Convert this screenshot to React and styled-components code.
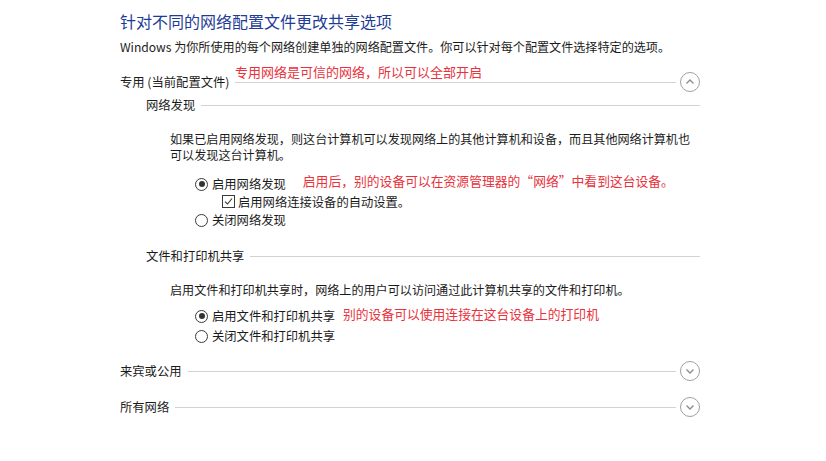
import React from 'react';
import styled, { createGlobalStyle } from 'styled-components';

const GlobalStyle = createGlobalStyle`
  html, body {
    margin: 0;
    padding: 0;
    background: #ffffff;
  }
  body {
    font-family: "Microsoft YaHei", "Noto Sans CJK SC", "Noto Sans", sans-serif;
    color: #1b1b1b;
  }
`;

const Page = styled.div`
  width: 826px;
  height: 461px;
  box-sizing: border-box;
  padding: 10px 0 0 120px;
  display: flex;
  flex-direction: column;
`;

const Content = styled.div`
  width: 580px;
  display: flex;
  flex-direction: column;
`;

const Title = styled.h1`
  margin: 0;
  font-size: 16px;
  font-weight: 400;
  line-height: 22px;
  color: #1e3c96;
  white-space: nowrap;
`;

const Text = styled.p`
  margin: ${(p) => p.$top || 0}px 0 0 ${(p) => p.$indent || 0}px;
  font-size: 12.1px;
  line-height: 16px;
  white-space: nowrap;
`;

const HeaderRow = styled.div`
  position: relative;
  display: flex;
  align-items: center;
  height: ${(p) => p.$height}px;
  margin-top: ${(p) => p.$top}px;
  padding-left: ${(p) => p.$indent || 0}px;
  font-size: 12.3px;
  white-space: nowrap;
`;

const Rule = styled.div`
  flex: 1;
  height: 1px;
  background: #d2d2d2;
  margin-left: 6px;
`;

const Note = styled.span`
  color: #e8323c;
  font-size: 12.8px;
  line-height: 16px;
  white-space: nowrap;
`;

const HeaderNote = styled(Note)`
  position: absolute;
  left: 115px;
  top: -7px;
  font-size: 13px;
`;

const ToggleCircle = styled.div`
  width: 18px;
  height: 18px;
  border: 1.3px solid #a0a0a0;
  border-radius: 50%;
  margin-left: 4px;
  display: flex;
  align-items: center;
  justify-content: center;
  flex-shrink: 0;
`;

const OptionRow = styled.label`
  display: flex;
  align-items: center;
  height: ${(p) => p.$height || 20}px;
  margin-top: ${(p) => p.$top || 0}px;
  padding-left: ${(p) => p.$indent}px;
  font-size: 12.3px;
  white-space: nowrap;
`;

const Radio = styled.span`
  width: 11px;
  height: 11px;
  border: 1px solid #3a3a3a;
  border-radius: 50%;
  margin-right: 4px;
  display: flex;
  align-items: center;
  justify-content: center;
  flex-shrink: 0;

  &::after {
    content: '';
    width: 6px;
    height: 6px;
    border-radius: 50%;
    background: ${(p) => (p.$checked ? '#333333' : 'transparent')};
  }
`;

const Check = styled.span`
  width: 11px;
  height: 11px;
  border: 1px solid #3a3a3a;
  margin-right: 3px;
  display: flex;
  align-items: center;
  justify-content: center;
  flex-shrink: 0;
`;

const InlineNote = styled(Note)`
  margin-left: ${(p) => p.$gap}px;
  align-self: flex-start;
  margin-top: ${(p) => p.$lift}px;
`;

const Chevron = ({ up }) => (
  <svg width="10" height="10" viewBox="0 0 10 10">
    <path
      d={up ? 'M1.5 6.5 L5 3 L8.5 6.5' : 'M1.5 3.5 L5 7 L8.5 3.5'}
      fill="none"
      stroke="#8a8a8a"
      strokeWidth="1.3"
    />
  </svg>
);

const App = () => {
  return (
    <>
      <GlobalStyle />
      <Page>
        <Content>
          <Title>针对不同的网络配置文件更改共享选项</Title>
          <Text $top={7}>Windows 为你所使用的每个网络创建单独的网络配置文件。你可以针对每个配置文件选择特定的选项。</Text>

          <HeaderRow $height={22} $top={16}>
            专用 (当前配置文件)
            <HeaderNote>专用网络是可信的网络，所以可以全部开启</HeaderNote>
            <Rule />
            <ToggleCircle>
              <Chevron up />
            </ToggleCircle>
          </HeaderRow>

          <HeaderRow $height={18} $top={3} $indent={26}>
            网络发现
            <Rule />
          </HeaderRow>

          <Text $top={17} $indent={50}>
            如果已启用网络发现，则这台计算机可以发现网络上的其他计算机和设备，而且其他网络计算机也
            <br />
            可以发现这台计算机。
          </Text>

          <OptionRow $top={11} $indent={75}>
            <Radio $checked />
            启用网络发现
            <InlineNote $gap={17} $lift={-1}>启用后，别的设备可以在资源管理器的“网络”中看到这台设备。</InlineNote>
          </OptionRow>
          <OptionRow $height={17} $top={-1} $indent={102}>
            <Check>
              <svg width="9" height="9" viewBox="0 0 9 9">
                <path d="M1 4.6 L3.5 7 L8 1.5" fill="none" stroke="#333" strokeWidth="1.1" />
              </svg>
            </Check>
            启用网络连接设备的自动设置。
          </OptionRow>
          <OptionRow $top={0} $indent={75}>
            <Radio />
            关闭网络发现
          </OptionRow>

          <HeaderRow $height={18} $top={17} $indent={26}>
            文件和打印机共享
            <Rule />
          </HeaderRow>

          <Text $top={17} $indent={50}>
            启用文件和打印机共享时，网络上的用户可以访问通过此计算机共享的文件和打印机。
          </Text>

          <OptionRow $top={8} $indent={75}>
            <Radio $checked />
            启用文件和打印机共享
            <InlineNote $gap={8} $lift={0}>别的设备可以使用连接在这台设备上的打印机</InlineNote>
          </OptionRow>
          <OptionRow $top={0} $indent={75}>
            <Radio />
            关闭文件和打印机共享
          </OptionRow>

          <HeaderRow $height={22} $top={14}>
            来宾或公用
            <Rule />
            <ToggleCircle>
              <Chevron />
            </ToggleCircle>
          </HeaderRow>

          <HeaderRow $height={22} $top={14}>
            所有网络
            <Rule />
            <ToggleCircle>
              <Chevron />
            </ToggleCircle>
          </HeaderRow>
        </Content>
      </Page>
    </>
  );
};

export default App;
